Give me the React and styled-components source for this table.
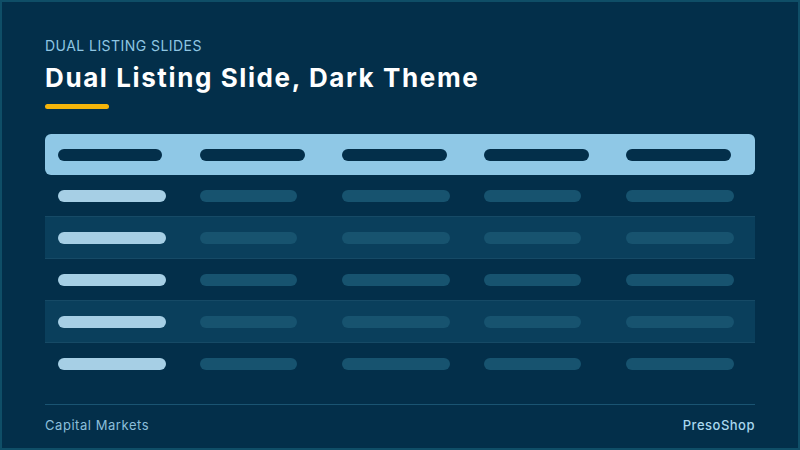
import React from 'react';
import styled, { createGlobalStyle } from 'styled-components';

const GlobalStyle = createGlobalStyle`
  * { box-sizing: border-box; }
  html, body { margin: 0; padding: 0; background: #032f4a; }
  body { font-family: Inter, "Open Sans", sans-serif; }
`;

const Frame = styled.div`
  width: 800px;
  height: 450px;
  border: 2px solid #0f4e67;
  background: #032f4a;
  padding: 34px 43px 0;
  display: flex;
  flex-direction: column;
`;

const Eyebrow = styled.div`
  font-size: 14px;
  line-height: 20px;
  color: #8fc6e2;
  letter-spacing: 0.45px;
`;

const Title = styled.h1`
  margin: 5px 0 0;
  font-size: 26px;
  line-height: 34px;
  font-weight: 700;
  color: #ffffff;
  letter-spacing: 1.6px;
`;

const Accent = styled.div`
  width: 64px;
  height: 5px;
  border-radius: 3px;
  background: #f5b50a;
  margin-top: 9px;
`;

const Table = styled.div`
  margin-top: 25px;
  display: flex;
  flex-direction: column;
`;

const HeaderRow = styled.div`
  display: grid;
  grid-template-columns: repeat(5, 1fr);
  height: 41px;
  align-items: center;
  background: #8fc8e6;
  border-radius: 6px;
`;

const Row = styled.div`
  display: grid;
  grid-template-columns: repeat(5, 1fr);
  height: 42px;
  align-items: center;
  background: ${({ $striped }) => ($striped ? '#0a3f5c' : 'transparent')};
  border-bottom: 1px solid ${({ $last }) => ($last ? 'transparent' : '#164a66')};
`;

const Cell = styled.div`
  padding-left: 13px;
  display: flex;
  align-items: center;
`;

const Bar = styled.div`
  height: 12px;
  border-radius: 6px;
  width: ${({ $w }) => $w}px;
  background: ${({ $tone }) =>
    $tone === 'head' ? '#032f4a' : $tone === 'key' ? '#a6cfe5' : '#17536f'};
`;

const Spacer = styled.div`
  flex: 1;
`;

const Footer = styled.div`
  border-top: 1px solid #1a5472;
  height: 44px;
  padding-top: 11px;
  display: flex;
  justify-content: space-between;
  align-items: flex-start;
  font-size: 13px;
  line-height: 18px;
`;

const FootLeft = styled.span`
  color: #8bbfdb;
  letter-spacing: 0.55px;
`;

const FootRight = styled.span`
  color: #a9d7ee;
  font-weight: 500;
  letter-spacing: 0.5px;
`;

const bodyWidths = [108, 97, 108, 97, 108];

function App() {
  const rows = [0, 1, 2, 3, 4];
  return (
    <>
      <GlobalStyle />
      <Frame>
        <Eyebrow>DUAL LISTING SLIDES</Eyebrow>
        <Title>Dual Listing Slide, Dark Theme</Title>
        <Accent />
        <Table>
          <HeaderRow>
            {bodyWidths.map((_, i) => (
              <Cell key={i}>
                <Bar $tone="head" $w={i === 0 ? 104 : 105} />
              </Cell>
            ))}
          </HeaderRow>
          {rows.map((r) => (
            <Row key={r} $striped={r % 2 === 1} $last={r === rows.length - 1}>
              {bodyWidths.map((w, i) => (
                <Cell key={i}>
                  <Bar $tone={i === 0 ? 'key' : 'body'} $w={w} />
                </Cell>
              ))}
            </Row>
          ))}
        </Table>
        <Spacer />
        <Footer>
          <FootLeft>Capital Markets</FootLeft>
          <FootRight>PresoShop</FootRight>
        </Footer>
      </Frame>
    </>
  );
}

export default App;
